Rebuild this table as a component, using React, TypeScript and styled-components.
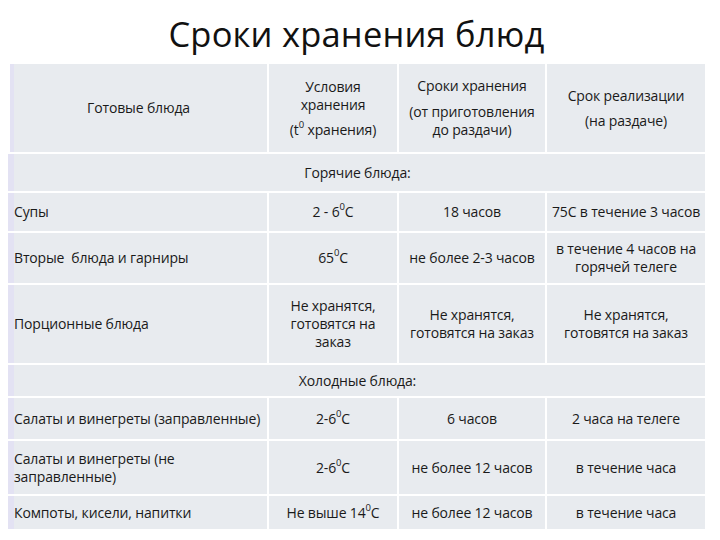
import React from "react";
import styled, { createGlobalStyle } from "styled-components";

const GlobalStyle = createGlobalStyle`
  html, body {
    margin: 0;
    padding: 0;
    background: #fff;
  }
  body {
    font-family: "Open Sans", "Noto Sans", "Liberation Sans", sans-serif;
    color: #1a1a1a;
  }
`;

const Page = styled.div`
  width: 720px;
  height: 540px;
  box-sizing: border-box;
  padding: 0 15px 0 8px;
  overflow: hidden;
`;

const Title = styled.h1`
  margin: 0;
  height: 62px;
  padding-top: 14px;
  box-sizing: border-box;
  text-align: center;
  font-weight: 400;
  font-size: 34.5px;
  line-height: 40px;
  letter-spacing: 0.2px;
  color: #111;
`;

const Table = styled.table`
  width: 697px;
  table-layout: fixed;
  border-collapse: collapse;
  background: #e8ebef;
  font-size: 14px;
  line-height: 18px;
  letter-spacing: -0.15px;
  box-shadow: inset 6px 0 0 #e3e2f3, inset 2px 0 0 #eeeef8;
`;

const Row = styled.tr<{ $h: number }>`
  height: ${(p) => p.$h}px;
`;

const Cell = styled.td<{ $left?: boolean }>`
  border: 2px solid #fff;
  border-left-color: ${(p) => (p.$left ? "transparent" : "#fff")};
  padding: ${(p) => (p.$left ? "0 4px 0 4px" : "0 4px")};
  text-align: ${(p) => (p.$left ? "left" : "center")};
  vertical-align: middle;
  white-space: pre-line;
`;

const GroupCell = styled.td`
  border: 2px solid #fff;
  border-left-color: transparent;
  text-align: center;
  vertical-align: middle;
  padding: 0;
`;

const Line = styled.div<{ $gap?: number }>`
  margin-top: ${(p) => p.$gap ?? 0}px;
`;

const Deg = styled.sup`
  font-size: 9.5px;
  line-height: 0;
  position: relative;
  top: -1px;
  vertical-align: super;
`;

const Temp = ({ text }: { text: string }) => {
  const [a, b] = text.split("°");
  return (
    <>
      {a}
      <Deg>0</Deg>
      {b}
    </>
  );
};

type Body = { name: string; cond: string; keep: string; sell: string; h: number };

const hot: Body[] = [
  { name: "Супы", cond: "2 - 6°С", keep: "18 часов", sell: "75С в течение 3 часов", h: 40 },
  {
    name: "Вторые\u00a0 блюда и гарниры",
    cond: "65°С",
    keep: "не более 2-3 часов",
    sell: "в течение 4 часов на\nгорячей телеге",
    h: 52,
  },
  {
    name: "Порционные блюда",
    cond: "Не хранятся,\nготовятся на\nзаказ",
    keep: "Не хранятся,\nготовятся на заказ",
    sell: "Не хранятся,\nготовятся на заказ",
    h: 80,
  },
];

const cold: Body[] = [
  {
    name: "Салаты и винегреты (заправленные)",
    cond: "2-6°С",
    keep: "6 часов",
    sell: "2 часа на телеге",
    h: 43,
  },
  {
    name: "Салаты и винегреты (не\nзаправленные)",
    cond: "2-6°С",
    keep: "не более 12 часов",
    sell: "в течение часа",
    h: 55,
  },
  {
    name: "Компоты, кисели, напитки",
    cond: "Не выше 14°С",
    keep: "не более 12 часов",
    sell: "в течение часа",
    h: 35,
  },
];

const BodyRow = ({ r }: { r: Body }) => (
  <Row $h={r.h}>
    <Cell $left>{r.name}</Cell>
    <Cell>{r.cond.includes("°") ? <Temp text={r.cond} /> : r.cond}</Cell>
    <Cell>{r.keep}</Cell>
    <Cell>{r.sell}</Cell>
  </Row>
);

export default function App() {
  return (
    <Page>
      <GlobalStyle />
      <Title>Сроки хранения блюд</Title>
      <Table>
        <colgroup>
          <col style={{ width: 259 }} />
          <col style={{ width: 130 }} />
          <col style={{ width: 148 }} />
          <col style={{ width: 160 }} />
        </colgroup>
        <tbody>
          <Row $h={90}>
            <Cell>Готовые блюда</Cell>
            <Cell>
              <Line>Условия</Line>
              <Line>хранения</Line>
              <Line $gap={7}>
                (t<Deg>0</Deg> хранения)
              </Line>
            </Cell>
            <Cell>
              <Line>Сроки хранения</Line>
              <Line $gap={8}>(от приготовления</Line>
              <Line>до раздачи)</Line>
            </Cell>
            <Cell>
              <Line>Срок реализации</Line>
              <Line $gap={7}>(на раздаче)</Line>
            </Cell>
          </Row>
          <Row $h={39}>
            <GroupCell colSpan={4}>Горячие блюда:</GroupCell>
          </Row>
          {hot.map((r) => (
            <BodyRow key={r.name} r={r} />
          ))}
          <Row $h={33}>
            <GroupCell colSpan={4}>Холодные блюда:</GroupCell>
          </Row>
          {cold.map((r) => (
            <BodyRow key={r.name} r={r} />
          ))}
        </tbody>
      </Table>
    </Page>
  );
}
